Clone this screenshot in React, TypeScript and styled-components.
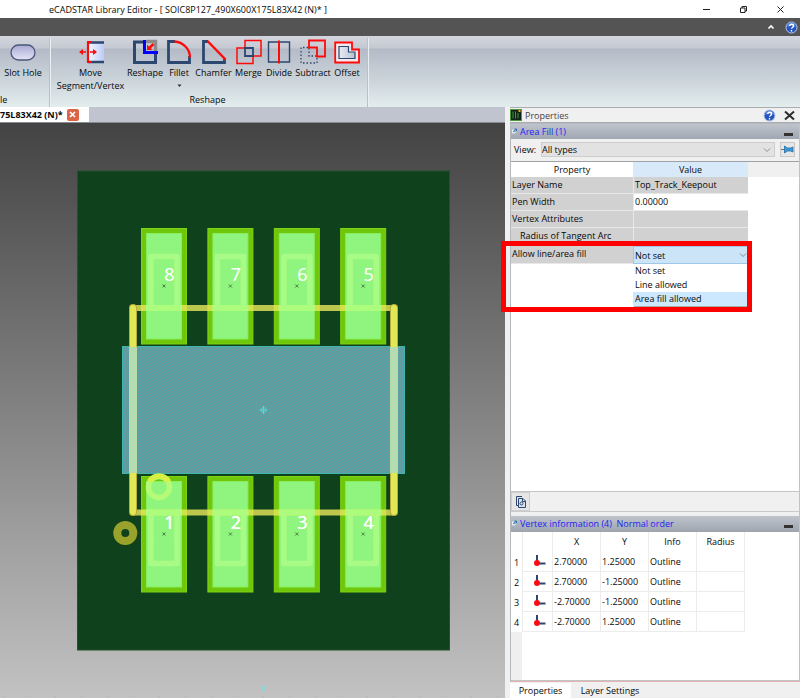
import React from "react";
import styled, { createGlobalStyle, css } from "styled-components";

const NAVY = "#2c4770";
const RED = "#ff0a0a";

const GlobalStyle = createGlobalStyle`
  * { box-sizing: border-box; }
  body { margin: 0; background: #f0f0f0; }
  body, button, select, table {
    font-family: "Open Sans", "Noto Sans", sans-serif;
    font-size: 9px;
    line-height: 13px;
    color: #080808;
  }
  button { border: 0; padding: 0; margin: 0; background: none; cursor: pointer; }
  svg { display: block; flex: none; }
`;

const Window = styled.div`
  display: flex;
  flex-direction: column;
  min-height: 100vh;
  overflow: hidden;
`;

const TitleBar = styled.header`
  display: flex;
  align-items: center;
  height: 18px;
  padding: 0 15px 0 49px;
  background: #fff;
`;

const Title = styled.h1`
  flex: 1;
  margin: 0;
  font-size: 9px;
  font-weight: 400;
  white-space: nowrap;
`;

const WindowButtons = styled.div`
  display: flex;
  gap: 28px;
`;

const MenuStrip = styled.div`
  display: flex;
  align-items: center;
  justify-content: flex-end;
  gap: 10px;
  height: 18px;
  padding-right: 2px;
  background: #545454;
`;

const Ribbon = styled.nav`
  display: flex;
  height: 71px;
  padding: 2px 0 0;
  background: linear-gradient(#d3d6df 0, #c5c9d2 12px, #b4bbc7 13px, #cad2d9 42px, #e3eded 71px);
`;

const RibbonGroup = styled.section<{ $start: number; $end: number }>`
  display: flex;
  flex-direction: column;
  justify-content: space-between;
  padding: 1px ${(p) => p.$end}px 1px ${(p) => p.$start}px;
  border-right: 1px solid #b9c1c8;
  box-shadow: 1px 0 #e9eff2;
`;

const Tools = styled.div`
  display: flex;
`;

const Tool = styled.button<{ $width: number }>`
  display: flex;
  flex-direction: column;
  align-items: center;
  width: ${(p) => p.$width}px;
  white-space: nowrap;
`;

const ToolIcon = styled.span`
  display: flex;
  height: 27px;
  align-items: flex-start;
`;

const GroupTitle = styled.div<{ $align: string }>`
  text-align: ${(p) => p.$align};
`;

const Workspace = styled.main`
  display: flex;
  flex: 1;
`;

const Editor = styled.section`
  display: flex;
  flex: 1;
  flex-direction: column;
  min-width: 0;
`;

const DocumentTabs = styled.div`
  display: flex;
  height: 16px;
  background: #c0c4cf;
  border-bottom: 1px solid #888b92;
`;

const DocumentTab = styled.div`
  display: flex;
  align-items: center;
  gap: 4px;
  width: 89px;
  background: #fff;
  font-weight: 700;
  white-space: nowrap;
`;

const CloseTab = styled.button`
  display: grid;
  place-items: center;
  width: 12px;
  height: 12px;
  border-radius: 2px;
  background: #dc6548;
`;

const Canvas = styled.div`
  display: flex;
  flex: 1;
  background: linear-gradient(#434343, #c2c2c2);

  svg { flex: 1; width: 100%; height: auto; }
  text { font-family: "Noto Sans", "Open Sans", sans-serif; }
`;

const Dock = styled.aside`
  display: flex;
  flex-direction: column;
  width: 295px;
  padding-left: 5px;
  background: #f0f0f0;
`;

const DockHeader = styled.div`
  display: flex;
  align-items: center;
  gap: 3px;
  height: 16px;
  padding: 0 5px 0 0;
  border: 1px solid #a9adb1;
  border-width: 1px 0 1px 0;
  color: #444;
`;

const DockTitle = styled.h2`
  flex: 1;
  margin: 0;
  font-size: 9px;
  font-weight: 400;
`;

const HeaderActions = styled.div`
  display: flex;
  align-items: center;
  gap: 8px;
`;

const DockBody = styled.div`
  display: flex;
  flex: 1;
  flex-direction: column;
  border: 1px solid #b4b9bd;
  border-right-color: #e4b4b4;
  border-bottom-color: #e4b4b4;
`;

const SectionBar = styled.div`
  display: flex;
  align-items: center;
  gap: 3px;
  height: 15px;
  padding: 0 6px 0 1px;
  background: linear-gradient(#bfc4cc, #a0a7b2);
  color: #1d1df2;
`;

const SectionTitle = styled.h3`
  flex: 1;
  margin: 0;
  font-size: 9px;
  font-weight: 400;
  white-space: pre;
`;

const Collapse = styled.button`
  align-self: flex-end;
  width: 9px;
  height: 5px;
  border-bottom: 3px solid #333;
  margin-bottom: 3px;
`;

const ViewRow = styled.div`
  display: flex;
  align-items: center;
  height: 22px;
  padding: 0 4px 1px 3px;
`;

const Picker = styled.div<{ $bright?: boolean }>`
  display: flex;
  flex: 1;
  align-items: center;
  height: 15px;
  padding-right: 3px;
  border: 1px solid #cdcdcd;
  background: #e2e2e2;

  ${(p) => p.$bright && css`
    border-color: #9fc7e8;
    background: #cce4f7;
    height: 18px;
    padding: 0 0 0 1px;
  `}

  select {
    flex: 1;
    min-width: 0;
    padding: 0;
    border: 0;
    outline: 0;
    background: transparent;
    appearance: none;
  }
`;

const ViewLabel = styled.label`
  width: 27px;
`;

const PinButton = styled.button`
  display: grid;
  place-items: center;
  width: 15px;
  height: 15px;
  margin-left: 5px;
  border: 1px solid #c8c8c8;
  background: #e6e6e6;
`;

const Sheet = styled.div<{ $grow?: boolean }>`
  position: relative;
  display: flex;
  flex-direction: column;
  flex: ${(p) => (p.$grow ? "1" : "none")};
  min-height: ${(p) => (p.$grow ? "0" : "150px")};
  border-top: 1px solid #9fa3a8;
  border-bottom: 1px solid #c4c4c4;
  background: #fff;
`;

const PropertyTable = styled.table`
  width: 100%;
  table-layout: fixed;
  border-collapse: separate;
  border-spacing: 0;

  th, td {
    height: 17px;
    padding: 0 1px 2px;
    border-bottom: 1px solid #e8e8e8;
    text-align: left;
    font-weight: 400;
    white-space: nowrap;
  }
  thead th { height: 15px; padding: 0; border: 0; text-align: center; }
`;

const Column = styled.col<{ $width?: number }>`
  width: ${(p) => (p.$width ? `${p.$width}px` : "auto")};
`;

const HeadCell = styled.th<{ $fill: string }>`
  background: ${(p) => p.$fill};
`;

const NameCell = styled.th<{ $nested?: boolean }>`
  && {
    padding-left: ${(p) => (p.$nested ? 9 : 1)}px;
    height: ${(p) => (p.$nested ? 18 : 17)}px;
  }
  background: #d1d1d1;
`;

const ValueCell = styled.td<{ $editable?: boolean; $open?: boolean }>`
  border-left: 1px solid #e8e8e8;
  background: ${(p) => (p.$editable ? "#fff" : "#d1d1d1")};
  ${(p) => p.$open && css`&& { padding: 0; border: 0; }`}
`;

const DropAnchor = styled.div`
  position: relative;
`;

const DropList = styled.ul`
  position: absolute;
  z-index: 1;
  top: 100%;
  left: 0;
  right: 0;
  margin: 0;
  padding: 0;
  list-style: none;
  background: #fff;
  box-shadow: 1px 1px 1px #aaa;
`;

const DropItem = styled.li<{ $active?: boolean }>`
  height: 14px;
  padding-left: 2px;
  background: ${(p) => (p.$active ? "#cce8ff" : "#fff")};
`;

const Highlight = styled.div`
  position: absolute;
  z-index: 2;
  top: 79px;
  left: -10px;
  width: 251px;
  height: 71px;
  border: 5px solid #fe0000;
  pointer-events: none;
`;

const ToolRow = styled.div`
  display: flex;
  height: 20px;
  margin-bottom: 4px;
  border-bottom: 1px solid #c9c9c9;
`;

const SheetButton = styled.button`
  display: grid;
  place-items: center;
  width: 19px;
  border: 1px solid #cfcfcf;
  background: #e6e6e6;
`;

const VertexTable = styled.table`
  width: 234px;
  table-layout: fixed;
  border-collapse: separate;
  border-spacing: 0;

  th, td {
    height: 20px;
    padding: 0 0 0 1px;
    border-right: 1px solid #ececec;
    text-align: left;
    font-weight: 400;
  }
  td { border-bottom: 1px solid #ececec; }
  thead th, tbody th { padding: 0; text-align: center; }
  thead th { padding-bottom: 2px; }
`;

const RowGutter = styled.div`
  flex: 1;
  width: 11px;
  background: #efefef;
`;

const DockTabs = styled.div`
  display: flex;
  height: 16px;
  padding-top: 1px;
`;

const DockTab = styled.button<{ $active?: boolean; $width: number }>`
  width: ${(p) => p.$width}px;
  background: ${(p) => (p.$active ? "#fff" : "#f0f0f0")};
`;

const HelpIcon = () => (
  <svg width="13" height="13" viewBox="0 0 13 13">
    <circle cx="6.5" cy="6.5" r="5.5" fill="#2454c0" stroke="#bccbea" />
    <path d="M2 6a4.500 4.500 0 0 1 9 0q-4-2-9 0Z" fill="#5582dc" />
    <path d="M4.700 5q0-1.800 1.900-1.800t1.900 1.700q0 1-1 1.600t-1 1.300M6.500 9v1.400" fill="none" stroke="#fff" strokeWidth="1.400" />
  </svg>
);

const Chevron = () => (
  <svg width="8" height="6" viewBox="0 0 8 6">
    <path d="M1 1.500 4 4.500 7 1.500" fill="none" stroke="#777" strokeWidth=".8" />
  </svg>
);

const SectionMark = () => (
  <svg width="5" height="7" viewBox="0 0 5 7">
    <path d="M.5 2h2M.5 2v3h2.500V4" fill="none" stroke="#e8f2fa" />
    <path d="m1.500 4 2.500-3M2.500 1H4.500v2" fill="none" stroke="#2f74b5" />
  </svg>
);

const CornerIcon = () => (
  <svg width="29" height="14" viewBox="0 0 29 14">
    <path d="M13 0v8.500H21.500" fill="none" stroke={NAVY} strokeWidth="2" />
    <circle cx="13" cy="8" r="3" fill="#fb0b12" />
  </svg>
);

const icons: Record<string, React.ReactNode> = {
  slot: (
    <>
      <defs>
        <linearGradient id="slot" x2="0" y2="1">
          <stop stopColor="#a9a9d4" />
          <stop offset="1" stopColor="#e4e4f7" />
        </linearGradient>
      </defs>
      <rect x="1" y="6" width="24" height="15" rx="7.500" fill="url(#slot)" stroke="#4a5878" strokeWidth="1.300" />
    </>
  ),
  move: (
    <>
      <defs>
        <linearGradient id="move">
          <stop stopColor="#f8f9ff" />
          <stop offset="1" stopColor="#bccbf8" />
        </linearGradient>
      </defs>
      <path d="M10 4h16v19H10Z" fill="url(#move)" />
      <path d="M10 3.500h16M10 23h16" stroke={NAVY} strokeWidth="2.500" />
      <path d="M14 3h-4v20H14" fill="none" stroke={RED} strokeWidth="2.200" />
      <path d="M3 13h5M12 13h5" stroke={RED} strokeWidth="1.600" />
      <path d="M1 13 5 10v6ZM19 13l-4-3v6Z" fill={RED} />
    </>
  ),
  reshape: (
    <>
      <path d="M12 3H2.500v20.500h21V14" fill="none" stroke={NAVY} strokeWidth="3" />
      <path d="M14 2.500h9.500V12" fill="none" stroke="#8c8c8c" strokeWidth="3.400" />
      <path d="M12.500 1v12.500H26" fill="none" stroke="#0000f8" strokeWidth="3" />
      <path d="m21.500 5-4 3.700" stroke={RED} strokeWidth="2.600" />
      <path d="M15 11V5.500l5.500 5.500Z" fill={RED} />
    </>
  ),
  fillet: (
    <>
      <path d="M9 2.500H2.500v21h21V17" fill="none" stroke={NAVY} strokeWidth="2.800" />
      <path d="M8.500 2.500C17 3 24 10 24 18.500" fill="none" stroke={RED} strokeWidth="2.400" />
    </>
  ),
  chamfer: (
    <>
      <path d="M7 2.500H2.500v21h21V20" fill="none" stroke={NAVY} strokeWidth="2.800" />
      <path d="m6.500 2 18 18.500" fill="none" stroke={RED} strokeWidth="2.400" />
    </>
  ),
  merge: (
    <g fill="none" strokeWidth="1.500">
      <path d="M9 9V1.500h16V17h-8M9 9H1v15.500h16V17" stroke={RED} />
      <path d="M9 9h8v8H9Z" stroke={NAVY} strokeWidth="1.800" />
    </g>
  ),
  divide: (
    <g fill="none">
      <path d="M2.500 3h21v20h-21Z" stroke={NAVY} strokeWidth="1.400" />
      <path d="M13 1.500v23" stroke={RED} strokeWidth="2" />
    </g>
  ),
  subtract: (
    <g fill="none">
      <path d="M8 8.500H1V24h16v-7M9 9v8h8" stroke={NAVY} strokeWidth="1.300" strokeDasharray="1.500 2" />
      <path d="M9 8.500v-7h16v16h-8v-9Z" stroke={RED} strokeWidth="1.800" />
    </g>
  ),
  offset: (
    <>
      <defs>
        <linearGradient id="offset">
          <stop stopColor="#e8ebf2" />
          <stop offset="1" stopColor="#b7c0d1" />
        </linearGradient>
      </defs>
      <path d="M1.200 3.500H18v7h7v13H1.200Z" fill="#f0e9ee" stroke={RED} strokeWidth="1.800" />
      <path d="M5 7.500h9.500V13H21v6.500H5Z" fill="url(#offset)" stroke={NAVY} strokeWidth="1.200" />
    </>
  ),
};

const Icon = ({ name }: { name: string }) => (
  <ToolIcon>
    <svg width="26" height="26" viewBox="0 0 26 26">{icons[name]}</svg>
  </ToolIcon>
);

const tools = [
  { id: "move", width: 73, label: "Move", second: "Segment/Vertex" },
  { id: "reshape", width: 36, label: "Reshape" },
  { id: "fillet", width: 32, label: "Fillet", menu: true },
  { id: "chamfer", width: 37, label: "Chamfer" },
  { id: "merge", width: 33, label: "Merge" },
  { id: "divide", width: 28, label: "Divide" },
  { id: "subtract", width: 40, label: "Subtract" },
  { id: "offset", width: 28, label: "Offset" },
];

const padColumns = [141, 207.4, 273.8, 340.200];
const topPads = ["8", "7", "6", "5"];
const bottomPads = ["1", "2", "3", "4"];

const Pad = ({ x, label, bottom }: { x: number; label: string; bottom?: boolean }) => {
  const y = bottom ? 353 : 105;
  return (
    <g>
      <rect x={x + 0.5} y={y + 0.5} width="45" height="115.500" fill="#6fc60b" stroke="#7dd411" />
      <rect x={x + 5.5} y={y + 5.500} width="35" height="105.500" fill="#90f57e" stroke="#86ef5c" />
      <path
        d={bottom ? `M${x + 10} 392v48.500h26V392` : `M${x + 10} 184v-50.500h26V184`}
        fill="none" stroke="#a8fb85" strokeWidth="5.500" strokeLinejoin="round"
      />
      <circle cx={x + 10} cy={y + 54 + (bottom ? 8 : 0)} r="3" fill="#a8fb85" />
      <circle cx={x + 36} cy={y + 54 + (bottom ? 8 : 0)} r="3" fill="#a8fb85" />
      <path d={`m${x + 21.5} ${y + 56.5} 3 3m0-3-3 3`} stroke="#4c7f42" />
      <text x={x + 28.500} y={y + 53} fontSize="18" textAnchor="middle" fill="#fff">{label}</text>
    </g>
  );
};

const Footprint = () => (
  <svg viewBox="0 0 505 575" role="img" aria-label="SOIC8 footprint">
    <defs>
      <pattern id="hatch" width="3" height="3" patternUnits="userSpaceOnUse">
        <rect width="3" height="3" fill="#50a2a4" />
        <path d="M0 0h1v1H0ZM1 1h1v1H1ZM2 2h1v1H2Z" fill="#7b969a" shapeRendering="crispEdges" />
      </pattern>
    </defs>
    <rect x="77.500" y="48" width="372" height="479" fill="#10411d" stroke="#24502f" />
    {topPads.map((n, i) => <Pad key={n} x={padColumns[i]} label={n} />)}
    {bottomPads.map((n, i) => <Pad key={n} x={padColumns[i]} label={n} bottom />)}
    <path d="M133 185h261M133 389.500h261" stroke="#e8e75a" strokeOpacity=".8" strokeWidth="6" />
    {padColumns.map((x) => (
      <path key={x} d={`M${x + 5} 185h36M${x + 5} 389.500h36`} stroke="#acfc7e" strokeWidth="6" />
    ))}
    {[...topPads, ...bottomPads].map((n, i) => i > 3 && (
      <text key={n} x={padColumns[i - 4] + 28.5} y="406" fontSize="18" textAnchor="middle" fill="#fff">{n}</text>
    ))}
    <rect x="122.500" y="223.500" width="282" height="127" fill="url(#hatch)" stroke="#3fb5ae" />
    <g fill="none" strokeLinecap="round">
      <path d="M133 185v204M394 185v204" stroke="#b6ad3a" strokeWidth="8" />
      <path d="M133 185v204M394 185v204" stroke="#e2e854" strokeWidth="6" />
      <path d="M133 224v126M394 224v126" stroke="#b4dcae" strokeWidth="8" strokeLinecap="butt" />
    </g>
    <circle cx="159" cy="364" r="10.500" fill="none" stroke="#b4fb78" strokeWidth="5.500" />
    <path d="M149.500 358.500a11 11 0 0 1 19 0" fill="none" stroke="#d8ef43" strokeWidth="5.500" />
    <circle cx="125.300" cy="410" r="8" fill="none" stroke="#99a32b" strokeWidth="8" />
    <path d="M259.500 287h8M263.500 283v8" stroke="#54dcd8" />
    <circle cx="263.500" cy="287" r="2.500" fill="none" stroke="#54dcd8" strokeWidth=".7" />
    <text x="263.500" y="568" fontSize="7" textAnchor="middle" fill="#5ce6e6">0</text>
    <path d="M3 573.500h500" stroke="#6fd0d0" strokeWidth="1" strokeDasharray="1 25" />
  </svg>
);

const vertices = [
  ["2.70000", "1.25000"],
  ["2.70000", "-1.25000"],
  ["-2.70000", "-1.25000"],
  ["-2.70000", "1.25000"],
];

export default function App() {
  return (
    <Window>
      <GlobalStyle />
      <TitleBar>
        <Title>eCADSTAR Library Editor - [ SOIC8P127_490X600X175L83X42 (N)* ]</Title>
        <WindowButtons>
          <button aria-label="Minimize">
            <svg width="9" height="9" viewBox="0 0 9 9"><path d="M1 4.500h7" stroke="#222" /></svg>
          </button>
          <button aria-label="Restore">
            <svg width="9" height="9" viewBox="0 0 9 9">
              <path d="M1.500 3h4.500v4.500H1.500ZM3 3V1.500h4.500V6H6" fill="none" stroke="#222" />
            </svg>
          </button>
          <button aria-label="Close">
            <svg width="9" height="9" viewBox="0 0 9 9"><path d="m1.500 1.500 6 6m0-6-6 6" stroke="#222" /></svg>
          </button>
        </WindowButtons>
      </TitleBar>

      <MenuStrip>
        <button aria-label="Collapse ribbon">
          <svg width="8" height="6" viewBox="0 0 8 6"><path d="m1.500 4.500 2.500-2.500 2.500 2.500" fill="none" stroke="#fff" strokeWidth="1.700" /></svg>
        </button>
        <button aria-label="Help"><HelpIcon /></button>
      </MenuStrip>

      <Ribbon>
        <RibbonGroup $start={0} $end={3}>
          <Tools>
            <Tool $width={46}><Icon name="slot" />Slot Hole</Tool>
          </Tools>
          <GroupTitle $align="left">le</GroupTitle>
        </RibbonGroup>
        <RibbonGroup $start={4} $end={6}>
          <Tools>
            {tools.map((t) => (
              <Tool key={t.id} $width={t.width}>
                <Icon name={t.id} />
                <span>{t.label}</span>
                {t.second && <span>{t.second}</span>}
                {t.menu && <svg width="5" height="13" viewBox="0 0 5 13"><path d="M.5 5.500h4l-2 2.500Z" fill="#333" /></svg>}
              </Tool>
            ))}
          </Tools>
          <GroupTitle $align="center">Reshape</GroupTitle>
        </RibbonGroup>
      </Ribbon>

      <Workspace>
        <Editor>
          <DocumentTabs>
            <DocumentTab>
              75L83X42 (N)*
              <CloseTab aria-label="Close document">
                <svg width="7" height="7" viewBox="0 0 7 7"><path d="m1 1 5 5m0-5-5 5" stroke="#fff" strokeWidth="1.700" /></svg>
              </CloseTab>
            </DocumentTab>
          </DocumentTabs>
          <Canvas><Footprint /></Canvas>
        </Editor>

        <Dock>
          <DockHeader>
            <svg width="12" height="12" viewBox="0 0 12 12">
              <rect x=".5" y=".5" width="11" height="11" fill="#102417" stroke="#4d9838" />
              <path d="M3 2.500v7M5.500 2.500v7M8 4v5.500" stroke="#3d9a37" />
              <path d="M9.500 1v2" stroke="#ffa51f" strokeWidth="2" />
            </svg>
            <DockTitle>Properties</DockTitle>
            <HeaderActions>
              <button aria-label="Panel help"><HelpIcon /></button>
              <button aria-label="Close panel">
                <svg width="11" height="11" viewBox="0 0 11 11"><path d="m1 1.500 9 8m0-8-9 8" stroke="#2c2c2c" strokeWidth="2" /></svg>
              </button>
            </HeaderActions>
          </DockHeader>
          <DockBody>
            <SectionBar>
              <SectionMark />
              <SectionTitle>Area Fill (1)</SectionTitle>
              <Collapse aria-label="Collapse area fill" />
            </SectionBar>
            <ViewRow>
              <ViewLabel htmlFor="view">View:</ViewLabel>
              <Picker>
                <select id="view"><option>All types</option></select>
                <Chevron />
              </Picker>
              <PinButton aria-label="Pin">
                <svg width="13" height="9" viewBox="0 0 13 9">
                  <path d="M0 4.500h5" stroke="#5c7588" />
                  <path d="M3.500 1 6.500 3h3L12 2v5L9.500 6h-3L3.500 8Z" fill="#3d9ad8" stroke="#236ea8" strokeWidth=".8" />
                </svg>
              </PinButton>
            </ViewRow>
            <Sheet $grow>
              <PropertyTable>
                <colgroup><Column $width={122} /><Column $width={115} /><Column /></colgroup>
                <thead>
                  <tr>
                    <HeadCell $fill="#fff">Property</HeadCell>
                    <HeadCell $fill="#d8eaf9">Value</HeadCell>
                    <HeadCell $fill="#f0f0f0" />
                  </tr>
                </thead>
                <tbody>
                  <tr><NameCell>Layer Name</NameCell><ValueCell>Top_Track_Keepout</ValueCell></tr>
                  <tr><NameCell>Pen Width</NameCell><ValueCell $editable>0.00000</ValueCell></tr>
                  <tr><NameCell>Vertex Attributes</NameCell><ValueCell /></tr>
                  <tr><NameCell $nested>Radius of Tangent Arc</NameCell><ValueCell /></tr>
                  <tr>
                    <NameCell><label htmlFor="allow">Allow line/area fill</label></NameCell>
                    <ValueCell $editable $open>
                      <DropAnchor>
                        <Picker $bright>
                          <select id="allow">
                            <option>Not set</option>
                            <option>Line allowed</option>
                            <option>Area fill allowed</option>
                          </select>
                          <Chevron />
                        </Picker>
                        <DropList>
                          <DropItem>Not set</DropItem>
                          <DropItem>Line allowed</DropItem>
                          <DropItem $active>Area fill allowed</DropItem>
                        </DropList>
                      </DropAnchor>
                    </ValueCell>
                  </tr>
                </tbody>
              </PropertyTable>
              <Highlight />
            </Sheet>
            <ToolRow>
              <SheetButton aria-label="Copy properties">
                <svg width="10" height="12" viewBox="0 0 10 12">
                  <path d="M3 9.500H.500V.500H6M2.500 2.500h4.500L9.500 5v6.500h-7Z" fill="#dde5f0" stroke={NAVY} />
                  <path d="M6.500 2.500v3h3" fill="none" stroke={NAVY} />
                  <circle cx="5.500" cy="7.500" r="1.500" fill="none" stroke={NAVY} />
                </svg>
              </SheetButton>
            </ToolRow>
            <SectionBar>
              <SectionMark />
              <SectionTitle>Vertex information (4)  Normal order</SectionTitle>
              <Collapse aria-label="Collapse vertex information" />
            </SectionBar>
            <Sheet>
              <VertexTable>
                <colgroup>
                  <Column $width={12} /><Column $width={30} /><Column $width={48} />
                  <Column $width={48} /><Column $width={48} /><Column $width={48} />
                </colgroup>
                <thead>
                  <tr><th /><th /><th>X</th><th>Y</th><th>Info</th><th>Radius</th></tr>
                </thead>
                <tbody>
                  {vertices.map(([x, y], i) => (
                    <tr key={i}>
                      <th>{i + 1}</th>
                      <td><CornerIcon /></td>
                      <td>{x}</td>
                      <td>{y}</td>
                      <td>Outline</td>
                      <td />
                    </tr>
                  ))}
                </tbody>
              </VertexTable>
              <RowGutter />
            </Sheet>
          </DockBody>
          <DockTabs>
            <DockTab $active $width={61}>Properties</DockTab>
            <DockTab $width={78}>Layer Settings</DockTab>
          </DockTabs>
        </Dock>
      </Workspace>
    </Window>
  );
}
